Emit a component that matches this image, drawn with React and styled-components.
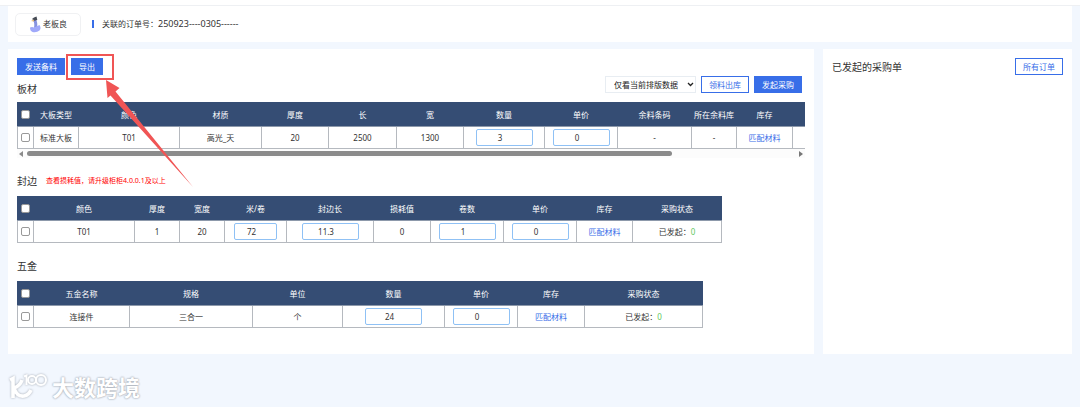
import React, { useState } from 'react';
import styled, { createGlobalStyle } from 'styled-components';

const GlobalStyle = createGlobalStyle`
  * {
    box-sizing: border-box;
  }

  body {
    margin: 0;
    background-color: #f2f7fe;
    color: #333;
    font-family: 'Noto Sans', 'Noto Sans CJK SC', sans-serif;
    font-size: 8px;
    line-height: 12px;
  }

  button, input, select {
    margin: 0;
    font: inherit;
    color: inherit;
  }
`;

const Page = styled.div`
  position: relative;
`;

const TopLine = styled.div`
  height: 6px;
  background-color: #fff;
  border-bottom: 1px solid #eef0f3;
`;

const Header = styled.header`
  display: flex;
  align-items: center;
  gap: 11px;
  height: 36px;
  margin: 0 8px;
  padding: 0 7px;
  background-color: #fff;
`;

const UserBox = styled.div`
  display: flex;
  align-items: center;
  justify-content: center;
  gap: 2px;
  width: 66px;
  height: 23px;
  border: 1px solid #f0f1f3;
  border-radius: 5px;
`;

const OrderNo = styled.div`
  display: flex;
  align-items: center;

  &::before {
    content: '';
    width: 2px;
    height: 8px;
    margin-right: 8px;
    background-color: #386ee8;
  }

  span {
    font-size: 9px;
  }
`;

const Content = styled.main`
  display: flex;
  gap: 9px;
  margin: 7px 8px 0;
`;

const Panel = styled.section`
  min-width: 0;
  flex: ${({ $side }) => ($side ? '0 0 249px' : '1')};
  padding: 9px 9px 26px;
  background-color: #fff;
`;

const Bar = styled.div`
  display: flex;
  justify-content: ${({ $between }) => ($between ? 'space-between' : 'flex-start')};
  align-items: center;
  gap: 6px;
`;

const Button = styled.button`
  height: 17px;
  padding: 0 7px;
  border: 1px solid #386ee8;
  background-color: ${({ $plain }) => ($plain ? '#fff' : '#386ee8')};
  color: ${({ $plain }) => ($plain ? '#386ee8' : '#fff')};
  line-height: 15px;
  white-space: nowrap;
`;

const SectionHead = styled.div`
  display: flex;
  align-items: center;
  gap: 9px;
  height: ${({ $first }) => ($first ? '27px' : '30px')};
  margin-top: ${({ $first }) => ($first ? '0' : '8px')};
`;

const Title = styled.h2`
  margin: 0;
  font-size: 10px;
  font-weight: 400;
  line-height: 16px;
`;

const Warning = styled.span`
  color: #f00;
  font-size: 7px;
`;

const Tools = styled.div`
  display: flex;
  gap: 5px;
  align-items: center;
  margin-left: auto;
  padding: 0 3px 8px 0;
`;

const SelectBox = styled.div`
  position: relative;

  svg {
    position: absolute;
    top: 6px;
    right: 2px;
    pointer-events: none;
  }
`;

const Select = styled.select`
  appearance: none;
  display: block;
  width: 91px;
  height: 17px;
  padding: 0 8px;
  border: 1px solid #e8edf2;
  border-radius: 0;
  background-color: #fff;
  color: #222;
`;

const TableScroll = styled.div`
  overflow-x: auto;
  scrollbar-width: none;
`;

const Table = styled.table`
  width: ${({ $width }) => $width}px;
  table-layout: fixed;
  border-collapse: collapse;

  th, td {
    padding: 0;
    border: 1px solid #b5b9bf;
    text-align: center;
    white-space: nowrap;
  }

  th {
    height: 24px;
    border-color: #354d74;
    border-bottom-color: #8d99ab;
    background-color: #354d74;
    color: #fff;
    font-weight: 400;
  }

  td {
    height: 22px;
  }
`;

const Check = styled.input`
  appearance: none;
  display: block;
  width: 9px;
  height: 9px;
  margin: 0 auto;
  border: 1px solid #999;
  border-radius: 2px;
  background-color: #fff;

  &:checked {
    background-color: #386ee8;
  }
`;

const NumberInput = styled.input`
  display: block;
  width: ${({ $small }) => ($small ? '43px' : '57px')};
  height: 17px;
  margin: 0 auto;
  padding: 0 8px 0 0;
  border: 1px solid #8fc1f5;
  border-radius: 2px;
  background-color: #fff;
  text-align: center;
`;

const Link = styled.a`
  color: #386ee8;
  text-decoration: none;
`;

const Count = styled.span`
  color: #5fc860;
`;

const ScrollBar = styled.div`
  display: flex;
  align-items: center;
  height: 9px;
  padding: 0 2px;
  background-color: #fcfcfc;
`;

const ScrollTrack = styled.div`
  flex: 1;
  padding: 0 4px;
`;

const ScrollThumb = styled.div`
  width: 84%;
  height: 5px;
  border-radius: 3px;
  background-color: #8b8b8b;
`;

const Annotation = styled.svg`
  position: absolute;
  top: 0;
  left: 0;
  pointer-events: none;
`;

const Watermark = styled.footer`
  display: flex;
  align-items: center;
  gap: 4px;
  margin: 17px 8px 0;
  color: #fff;
  font-size: 22px;
  font-weight: 700;
  line-height: 32px;
  text-shadow: 0 0 2px #9fa5ae, 0 0 2px #b4b9c1;

  svg {
    filter: drop-shadow(0 0 1px #a4aab3);
  }
`;

const sheetColumns = [
  { name: '大板类型', width: 45 },
  { name: '颜色', width: 101 },
  { name: '材质', width: 82 },
  { name: '厚度', width: 67 },
  { name: '长', width: 68 },
  { name: '宽', width: 67 },
  { name: '数量', width: 81, type: 'input' },
  { name: '单价', width: 73, type: 'input' },
  { name: '余料条码', width: 74 },
  { name: '所在余料库', width: 45 },
  { name: '库存', width: 56, type: 'link' },
  { name: '', width: 157 },
];

const edgeColumns = [
  { name: '颜色', width: 101 },
  { name: '厚度', width: 45 },
  { name: '宽度', width: 45 },
  { name: '米/卷', width: 62, type: 'input', small: true },
  { name: '封边长', width: 87, type: 'input' },
  { name: '损耗值', width: 57 },
  { name: '卷数', width: 73, type: 'input' },
  { name: '单价', width: 73, type: 'input' },
  { name: '库存', width: 56, type: 'link' },
  { name: '采购状态', width: 89, type: 'status' },
];

const hardwareColumns = [
  { name: '五金名称', width: 96 },
  { name: '规格', width: 123 },
  { name: '单位', width: 90 },
  { name: '数量', width: 102, type: 'input' },
  { name: '单价', width: 73, type: 'input' },
  { name: '库存', width: 67, type: 'link' },
  { name: '采购状态', width: 118, type: 'status' },
];

const Cell = ({ column, value }) => {
  const [text, setText] = useState(value);

  if (column.type === 'input') {
    return (
      <NumberInput
        aria-label={column.name}
        inputMode="decimal"
        $small={column.small}
        value={text}
        onChange={(e) => setText(e.target.value)}
      />
    );
  }
  if (column.type === 'link') {
    return <Link href="#match">{value}</Link>;
  }
  if (column.type === 'status') {
    return (
      <>
        已发起：<Count>{value}</Count>
      </>
    );
  }
  return value;
};

const MaterialTable = ({ label, columns, row }) => {
  const [checked, setChecked] = useState(false);
  const toggle = () => setChecked(!checked);
  const width = columns.reduce((sum, column) => sum + column.width, 17);

  return (
    <TableScroll>
      <Table $width={width} aria-label={label}>
        <colgroup>
          <col width="16" />
          {columns.map((column) => (
            <col key={column.name} width={column.width} />
          ))}
        </colgroup>
        <thead>
          <tr>
            <th>
              <Check type="checkbox" aria-label="全选" checked={checked} onChange={toggle} />
            </th>
            {columns.map((column) => (
              <th key={column.name}>{column.name}</th>
            ))}
          </tr>
        </thead>
        <tbody>
          <tr>
            <td>
              <Check type="checkbox" aria-label={row[0]} checked={checked} onChange={toggle} />
            </td>
            {columns.map((column, i) => (
              <td key={column.name}>
                <Cell column={column} value={row[i]} />
              </td>
            ))}
          </tr>
        </tbody>
      </Table>
    </TableScroll>
  );
};

const Avatar = () => (
  <svg width="12" height="17" viewBox="0 0 12 17" aria-hidden="true">
    <path d="M5.5 4C7 6 7 9 6.5 12" stroke="#8793e0" strokeWidth="3" fill="none" />
    <path d="M1 11.5q2-1 4 0l5.500-2.500q2 3 0 5.500-3 2.500-7 1.500-2.500-1-2.500-4.500z" fill="#a0a9fa" />
    <path d="M3 3l2-1.500 2.500-1 .8 3.500-3 .8z" fill="#454b55" />
    <path d="M2 5l3-1.500v2z" fill="#e4b36b" />
  </svg>
);

const App = () => {
  return (
    <>
      <GlobalStyle />
      <Page>
        <TopLine />
        <Header>
          <UserBox>
            <Avatar />
            老板良
          </UserBox>
          <OrderNo>
            关联的订单号：<span>250923----0305------</span>
          </OrderNo>
        </Header>
        <Content>
          <Panel>
            <Bar>
              <Button>发送备料</Button>
              <Button>导出</Button>
            </Bar>
            <SectionHead $first>
              <Title>板材</Title>
              <Tools>
                <SelectBox>
                  <Select aria-label="数据范围" defaultValue="current">
                    <option value="current">仅看当前排版数据</option>
                    <option value="all">查看全部数据</option>
                  </Select>
                  <svg width="7" height="5" viewBox="0 0 7 5" aria-hidden="true">
                    <path d="M1 1l2.500 2.500L6 1" fill="none" stroke="#222" strokeWidth="1.300" />
                  </svg>
                </SelectBox>
                <Button $plain>领料出库</Button>
                <Button>发起采购</Button>
              </Tools>
            </SectionHead>
            <MaterialTable
              label="板材"
              columns={sheetColumns}
              row={['标准大板', 'T01', '高光_天', '20', '2500', '1300', '3', '0', '-', '-', '匹配材料', '']}
            />
            <ScrollBar aria-hidden="true">
              <svg width="4" height="6" viewBox="0 0 4 6">
                <path d="M4 0v6L0 3z" fill="#8b8b8b" />
              </svg>
              <ScrollTrack>
                <ScrollThumb />
              </ScrollTrack>
              <svg width="4" height="6" viewBox="0 0 4 6">
                <path d="M0 0v6l4-3z" fill="#777" />
              </svg>
            </ScrollBar>
            <SectionHead>
              <Title>封边</Title>
              <Warning>查看损耗值，请升级柜柜4.0.0.1及以上</Warning>
            </SectionHead>
            <MaterialTable
              label="封边"
              columns={edgeColumns}
              row={['T01', '1', '20', '72', '11.3', '0', '1', '0', '匹配材料', '0']}
            />
            <SectionHead>
              <Title>五金</Title>
            </SectionHead>
            <MaterialTable
              label="五金"
              columns={hardwareColumns}
              row={['连接件', '三合一', '个', '24', '0', '匹配材料', '0']}
            />
          </Panel>
          <Panel $side>
            <Bar $between>
              <Title>已发起的采购单</Title>
              <Button $plain>所有订单</Button>
            </Bar>
          </Panel>
        </Content>
        <Watermark>
          <svg width="40" height="28" viewBox="0 0 40 28" fill="none" stroke="#fff" aria-hidden="true">
            <path d="M2 7l3-1.500V25M14 7Q12 13 6 15q3 9 10 8 5-1 7-6" strokeWidth="3.600" />
            <path d="M16 3.500l2.500-1V12" strokeWidth="2" />
            <circle cx="24" cy="7" r="4" strokeWidth="2" />
            <circle cx="33" cy="7" r="5" strokeWidth="2" />
          </svg>
          大数跨境
        </Watermark>
        <Annotation width="200" height="190" viewBox="0 0 200 190" aria-hidden="true">
          <rect x="67" y="55" width="46" height="24" fill="none" stroke="#f05555" strokeWidth="2" />
          <path d="M106 80l13.500 8-4 3.500 77.500 95.500-82.500-91.500-3 2.500z" fill="#f05555" />
        </Annotation>
      </Page>
    </>
  );
};

export default App;
